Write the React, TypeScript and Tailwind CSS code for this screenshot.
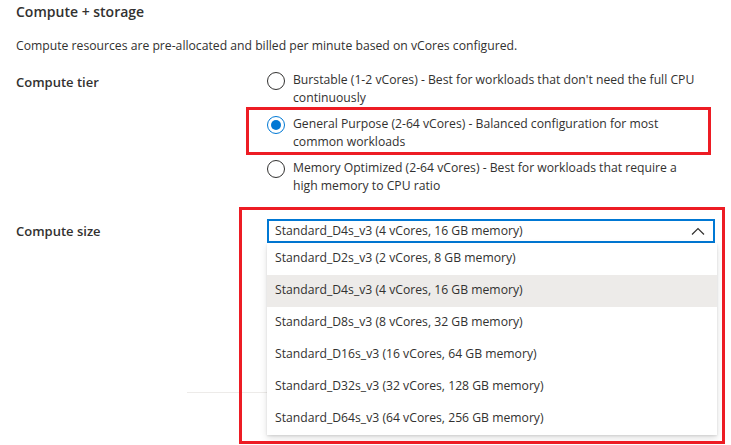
import { useState } from "react";

const tiers = [
  {
    id: "burstable",
    label: "Burstable (1-2 vCores) - Best for workloads that don't need the full CPU continuously",
  },
  {
    id: "general",
    label: "General Purpose (2-64 vCores) - Balanced configuration for most common workloads",
  },
  {
    id: "memory",
    label: "Memory Optimized (2-64 vCores) - Best for workloads that require a high memory to CPU ratio",
  },
];

const sizes = [
  "Standard_D2s_v3 (2 vCores, 8 GB memory)",
  "Standard_D4s_v3 (4 vCores, 16 GB memory)",
  "Standard_D8s_v3 (8 vCores, 32 GB memory)",
  "Standard_D16s_v3 (16 vCores, 64 GB memory)",
  "Standard_D32s_v3 (32 vCores, 128 GB memory)",
  "Standard_D64s_v3 (64 vCores, 256 GB memory)",
];

const Radio = ({ checked }: { checked: boolean }) => (
  <span
    className={`mt-[1px] flex h-[18px] w-[18px] flex-shrink-0 items-center justify-center rounded-full border ${
      checked ? "border-[#0078d4]" : "border-[#323130]"
    } bg-white`}
  >
    {checked && <span className="h-[10px] w-[10px] rounded-full bg-[#0078d4]" />}
  </span>
);

const App = () => {
  const [tier, setTier] = useState("general");
  const [size, setSize] = useState(sizes[1]);

  return (
    <div
      className="relative h-[445px] w-[731px] overflow-hidden bg-white text-[13px] text-[#323130]"
      style={{ fontFamily: '"Segoe UI", "Open Sans", sans-serif' }}
    >
      <div className="px-4 pt-[2px]">
        {/* Section header */}
        <h2 className="text-[14px] font-semibold leading-[20px]">Compute + storage</h2>
        <p className="mt-[15px] text-[12.2px] leading-[18px]">
          Compute resources are pre-allocated and billed per minute based on vCores configured.
        </p>

        {/* Compute tier */}
        <div className="mt-[16px] flex">
          <div className="w-[251px] flex-shrink-0 pt-[2px] font-semibold leading-[18px]">
            Compute tier
          </div>
          <div className="flex flex-col gap-[8px]">
            {tiers.map((t) => (
              <label
                key={t.id}
                onClick={() => setTier(t.id)}
                className="relative flex cursor-pointer items-start gap-[8px] text-[12.2px] leading-[18px]"
              >
                <Radio checked={tier === t.id} />
                <span className="w-[408px]">{t.label}</span>
                {t.id === "general" && (
                  <span className="pointer-events-none absolute -bottom-[4px] -left-[21px] -top-[8px] -right-[10px] border-[3px] border-[#ed1c24]" />
                )}
              </label>
            ))}
          </div>
        </div>

        {/* Compute size */}
        <div className="mt-[24px] flex">
          <div className="w-[251px] flex-shrink-0 pt-[3px] font-semibold leading-[18px]">
            Compute size
          </div>
          <div className="relative w-[449px]">
            <div className="flex h-[24px] items-center justify-between border-2 border-[#0078d4] pl-[6px] pr-[8px] text-[12.2px]">
              <span>{size}</span>
              <svg width="14" height="8" viewBox="0 0 14 8" fill="none">
                <path d="M1 7.5L7 1.5L13 7.5" stroke="#323130" strokeWidth="1.2" />
              </svg>
            </div>
            <div className="absolute left-0 top-[24px] z-10 w-[450px] bg-white shadow-[0_3px_7px_rgba(0,0,0,0.13),0_1px_2px_rgba(0,0,0,0.1)]">
              {sizes.map((s) => (
                <div
                  key={s}
                  onClick={() => setSize(s)}
                  className={`flex h-[32px] cursor-pointer items-center px-[8px] pb-[1px] text-[12.2px] ${
                    s === size ? "bg-[#edebe9]" : "bg-white"
                  }`}
                >
                  {s}
                </div>
              ))}
            </div>
            <span className="pointer-events-none absolute -left-[28px] -right-[10px] -top-[12px] z-20 h-[237px] border-[3px] border-[#ed1c24]" />
          </div>
        </div>

        <div className="ml-[171px] mt-[149px] h-px bg-[#edebe9]" />
      </div>
    </div>
  );
};

export default App;
